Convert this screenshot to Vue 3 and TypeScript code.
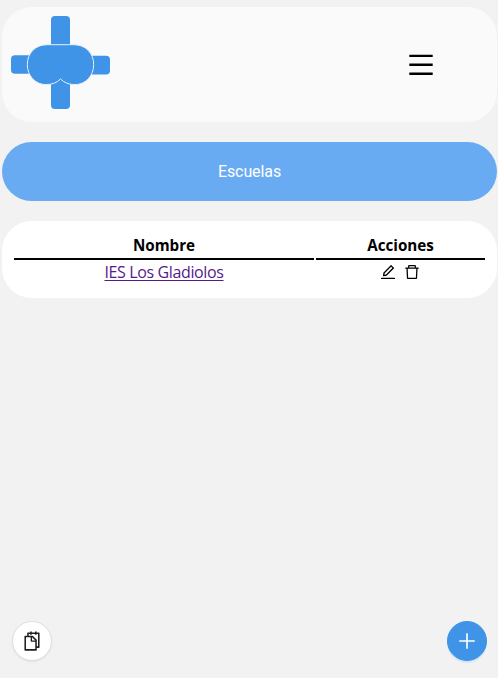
<script setup lang="ts">
interface School {
  id: number
  name: string
}

const schools: School[] = [{ id: 1, name: 'IES Los Gladiolos' }]

const icons = {
  edit: 'M257.7 752c2 0 4-.2 6-.5L431.9 722c2-.4 3.9-1.3 5.3-2.8l423.9-423.9a9.96 9.96 0 000-14.1L694.9 114.9c-1.9-1.9-4.4-2.9-7.1-2.9s-5.2 1-7.1 2.9L256.8 538.8c-1.5 1.5-2.4 3.3-2.8 5.3l-29.5 168.2a33.5 33.5 0 009.4 29.8c6.6 6.4 14.9 9.9 23.8 9.9zm67.4-174.4L687.8 215l73.3 73.3-362.7 362.6-88.9 15.7 15.6-89zM880 836H144c-17.7 0-32 14.3-32 32v36c0 4.4 3.6 8 8 8h784c4.4 0 8-3.6 8-8v-36c0-17.7-14.3-32-32-32z',
  remove: 'M360 184h-8c4.4 0 8-3.6 8-8v8h304v-8c0 4.4 3.6 8 8 8h-8v72h72v-80c0-35.3-28.7-64-64-64H352c-35.3 0-64 28.7-64 64v80h72v-72zm504 72H160c-17.7 0-32 14.3-32 32v32c0 4.4 3.6 8 8 8h60.4l24.7 523c1.6 34.1 29.8 61 63.9 61h454c34.2 0 62.3-26.8 63.9-61l24.7-523H888c4.4 0 8-3.6 8-8v-32c0-17.7-14.3-32-32-32zM731.3 840H292.7l-24.2-512h487l-24.2 512z',
  snippets: 'M832 112H724V72c0-4.4-3.6-8-8-8h-56c-4.4 0-8 3.6-8 8v40H500V72c0-4.4-3.6-8-8-8h-56c-4.4 0-8 3.6-8 8v40H320c-17.7 0-32 14.3-32 32v120h-96c-17.7 0-32 14.3-32 32v632c0 17.7 14.3 32 32 32h512c17.7 0 32-14.3 32-32v-96h96c17.7 0 32-14.3 32-32V144c0-17.7-14.3-32-32-32zM664 888H232V336h218v174c0 22.1 17.9 40 40 40h174v338zm0-402H514V336h.2L664 485.8v.2zm128 274h-56V456L544 264H360v-80h68v32c0 4.4 3.6 8 8 8h56c4.4 0 8-3.6 8-8v-32h152v32c0 4.4 3.6 8 8 8h56c4.4 0 8-3.6 8-8v-32h68v576z',
  plus: 'M482 152h60q8 0 8 8v704q0 8-8 8h-60q-8 0-8-8V160q0-8 8-8z M160 474h704q8 0 8 8v60q0 8-8 8H160q-8 0-8-8v-60q0-8 8-8z',
}
</script>

<template>
  <div class="page">
    <header class="header">
      <svg class="logo" viewBox="0 0 100 94" aria-hidden="true">
        <rect x="40" y="0" width="19" height="93" rx="4" />
        <rect x="0" y="39.2" width="50" height="18.6" rx="4" />
        <rect x="50" y="39.8" width="49" height="18.6" rx="4" />
        <path
          class="core"
          d="M36 28.7H63C74.5 28.7 82.7 37 82.7 48.5C82.7 60 74.5 68.6 64 68.6C57.5 68.6 53 66.5 49.5 63C46 66.5 41.5 68.6 35 68.6C24.5 68.6 16.3 60 16.3 48.5C16.3 37 24.5 28.7 36 28.7Z"
        />
      </svg>
      <button class="menu" type="button" aria-label="Menú">
        <svg viewBox="0 0 24 21">
          <path d="M.3 .7h23.4v2.3H.3zM.3 9.6h23.4v2.3H.3zM.3 18.6h23.4v2.3H.3z" />
        </svg>
      </button>
    </header>

    <h1 class="banner">Escuelas</h1>

    <main class="card">
      <div class="row head">
        <div class="cell">Nombre</div>
        <div class="cell">Acciones</div>
      </div>
      <div v-for="school in schools" :key="school.id" class="row">
        <div class="name"><a href="#">{{ school.name }}</a></div>
        <div class="actions">
          <svg viewBox="0 0 1024 1024"><path :d="icons.edit" /></svg>
          <svg viewBox="0 0 1024 1024"><path :d="icons.remove" /></svg>
        </div>
      </div>
    </main>

    <footer class="floating">
      <button class="fab" type="button" aria-label="Copiar">
        <svg viewBox="0 0 1024 1024"><path :d="icons.snippets" /></svg>
      </button>
      <button class="fab primary" type="button" aria-label="Añadir">
        <svg viewBox="0 0 1024 1024"><path :d="icons.plus" /></svg>
      </button>
    </footer>
  </div>
</template>

<style>
body {
  margin: 0;
  background: #f2f2f2;
}
</style>

<style scoped>
.page {
  box-sizing: border-box;
  display: flex;
  flex-direction: column;
  gap: 20px;
  height: 678px;
  padding: 7px 1px 17px 2px;
  background: #f2f2f2;
  font-family: 'Open Sans', 'Noto Sans', sans-serif;
  font-size: 16px;
  color: #000;
}
.header {
  box-sizing: border-box;
  display: flex;
  justify-content: space-between;
  height: 115px;
  padding: 9px 64px 0 9px;
  border-radius: 30px;
  background: #fafafa;
}
.logo {
  width: 100px;
  height: 94px;
  fill: #3f94e8;
}
.core {
  stroke: #e5f1fc;
  stroke-width: 1;
}
.menu {
  width: 24px;
  height: 21px;
  margin: 38px 0 0;
  padding: 0;
  border: 0;
  background: none;
}
.menu svg {
  display: block;
  width: 24px;
  height: 21px;
}
.banner {
  height: 59px;
  margin: 0;
  border-radius: 30px;
  background: #69abf3;
  color: #fff;
  font: 400 16px/59px Roboto, sans-serif;
  letter-spacing: -0.1px;
  text-align: center;
}
.card {
  box-sizing: border-box;
  height: 77px;
  padding: 12px;
  border-radius: 30px;
  background: #fff;
}
.row {
  display: grid;
  grid-template-columns: 300px 169px;
  gap: 2px;
  text-align: center;
}
.cell {
  height: 25px;
  border-bottom: 2px solid #000;
  font-size: 15.2px;
  font-weight: 700;
  line-height: 25px;
}
.name {
  line-height: 25px;
}
.name a {
  color: #551a8b;
  letter-spacing: -0.37px;
  text-underline-offset: 1.5px;
  text-decoration-thickness: 1px;
}
.actions {
  display: flex;
  justify-content: center;
  gap: 6px;
  padding: 3px 2px 0 0;
}
.actions svg {
  width: 18px;
  height: 18px;
}
.floating {
  display: flex;
  justify-content: space-between;
  margin-top: auto;
  padding: 0 10px;
}
.fab {
  box-sizing: border-box;
  display: flex;
  align-items: center;
  justify-content: center;
  width: 40px;
  height: 40px;
  padding: 0;
  border: 1px solid #dedede;
  border-radius: 50%;
  background: #fff;
  box-shadow: 0 1px 2px rgba(0, 0, 0, 0.06);
}
.fab svg {
  width: 22px;
  height: 22px;
  fill: #1f1f1f;
}
.fab.primary {
  border-color: #3f94e8;
  background: #3f94e8;
  box-shadow: 0 2px 0 rgba(5, 145, 255, 0.1);
}
.fab.primary svg {
  fill: #fff;
}
</style>
